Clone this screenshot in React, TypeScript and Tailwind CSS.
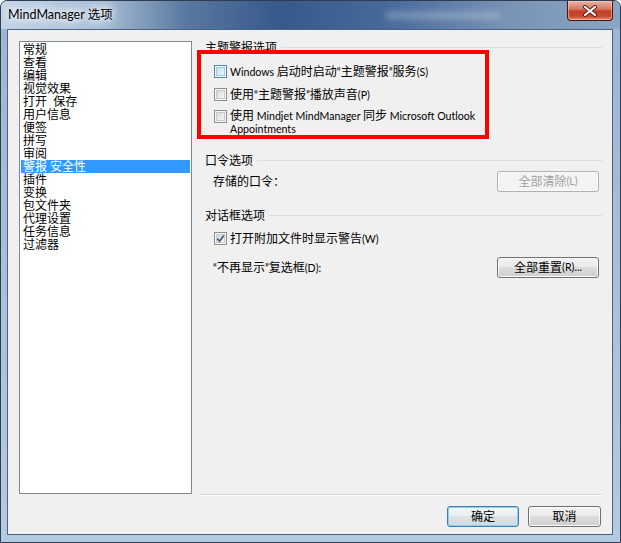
import React from "react";

type BoxState = "normal" | "hover" | "checked";

function CheckBox({ state }: { state: BoxState }) {
  const hover = state === "hover";
  return (
    <div
      className={
        hover
          ? "relative h-[13px] w-[13px] shrink-0 border border-[#5586a3] bg-[#f4fbff] p-[1px]"
          : "relative h-[13px] w-[13px] shrink-0 border border-[#8e8f8f] bg-[#f4f4f4] p-[1px]"
      }
    >
      <div
        className={
          hover
            ? "h-full w-full border border-[#9ccbe8] bg-[linear-gradient(135deg,#bfe1f5,#e8f6fd)]"
            : "h-full w-full border border-[#c9c9c9] bg-[linear-gradient(135deg,#d6d6d6,#f7f7f7)]"
        }
      />
      {state === "checked" && (
        <svg className="absolute left-[1px] top-[1px]" width="9" height="9" viewBox="0 0 9 9">
          <path d="M1.3 4.6 L3.6 7.2 L7.8 1.4" fill="none" stroke="#3f5582" strokeWidth="1.7" />
        </svg>
      )}
    </div>
  );
}

// latin runs are set a bit smaller, the dialog font is narrower than the cjk one
function L({ children }: { children: React.ReactNode }) {
  return <span className="text-[10.6px]">{children}</span>;
}

// one label line, fixed height so mixed font sizes don't grow the line box
function Line({ children }: { children: React.ReactNode }) {
  return <div className="h-[13px] leading-[13px] whitespace-nowrap">{children}</div>;
}

function GroupHeader({ title }: { title: string }) {
  return (
    <div className="flex h-[13px] items-center pl-[5px]">
      <span className="leading-[13px] whitespace-nowrap">{title}</span>
      <div className="ml-[4px] h-px flex-1 bg-[#d5dfe5]" />
    </div>
  );
}

function WinButton({
  children,
  kind = "normal",
  className = "",
}: {
  children: React.ReactNode;
  kind?: "normal" | "default" | "disabled";
  className?: string;
}) {
  let look =
    "border-[#707070] bg-[linear-gradient(to_bottom,#f2f2f2_0%,#ebebeb_50%,#dddddd_50%,#cfcfcf_100%)] shadow-[inset_0_0_0_1px_#fbfbfb] text-black";
  if (kind === "default")
    look =
      "border-[#3c7fb1] bg-[linear-gradient(to_bottom,#f3f6f8_0%,#eaeef1_50%,#dce3e8_50%,#d0dae1_100%)] shadow-[inset_0_0_0_1px_#8fd0f2] text-black";
  if (kind === "disabled")
    look = "border-[#adb2b5] bg-[#f4f4f4] text-[#a0a0a0] shadow-[inset_0_0_0_1px_#f9f9f9]";
  return (
    <div
      className={
        "flex h-[21px] items-center justify-center rounded-[3px] border leading-[13px] " + look + " " + className
      }
    >
      {children}
    </div>
  );
}

const pages = [
  "常规",
  "查看",
  "编辑",
  "视觉效果",
  "打开\u00a0\u00a0保存",
  "用户信息",
  "便签",
  "拼写",
  "审阅",
  "警报\u00a0安全性",
  "插件",
  "变换",
  "包文件夹",
  "代理设置",
  "任务信息",
  "过滤器",
];

export default function App() {
  return (
    <div className="h-[543px] w-[621px] font-['Lato','Noto_Sans_CJK_SC',sans-serif] text-[12px] text-black">
      <div className="flex h-full flex-col overflow-hidden rounded-t-[7px] border border-[#2f3d52] bg-[linear-gradient(to_bottom,#9cb5d1,#b4cae2)]">
        {/* title bar */}
        <div className="relative flex h-[28px] shrink-0 items-center bg-[linear-gradient(to_right,#c3d4e7_0%,#a9bfd8_16%,#58789f_30%,#37598b_45%,#46699a_62%,#7993b6_82%,#8ba5c4_100%)] pl-[7px]">
          <span className="text-[12.5px] leading-[14px] [text-shadow:0_0_6px_#ffffff,0_0_10px_#ffffff,0_0_14px_#e8f0f8]">
            MindManager 选项
          </span>
          <div className="ml-[272px] h-[7px] w-[116px] rounded-full bg-white/25 blur-[3px]" />
          <div className="absolute right-[7px] top-0 flex h-[20px] w-[46px] items-center justify-center rounded-b-[4px] border border-t-0 border-[#4a150d] bg-[linear-gradient(to_bottom,#e8b2a6_0%,#d97a66_40%,#c43e25_55%,#c84a30_80%,#e48b6d_100%)] shadow-[inset_0_0_0_1px_rgba(255,220,210,0.5)]">
            <svg width="16" height="12" viewBox="0 0 16 12">
              <path d="M3 2 L13 10 M13 2 L3 10" stroke="#5a1a10" strokeWidth="4" strokeLinecap="round" />
              <path d="M3 2 L13 10 M13 2 L3 10" stroke="#ffffff" strokeWidth="2.2" strokeLinecap="round" />
            </svg>
          </div>
        </div>

        {/* frame + client */}
        <div className="flex-1 pb-[7px] pl-[6px] pr-[7px]">
          <div className="h-full border border-[#4d6282] bg-[#f0f0f0] pl-[11px] pt-[11px]">
            <div className="flex h-[453px]">
              {/* list */}
              <div className="w-[173px] border border-[#828790] bg-white pl-[1px] pr-[1px] pt-[1px]">
                {pages.map((p) => (
                  <div
                    key={p}
                    className={
                      p.startsWith("警报")
                        ? "h-[13px] bg-[#3399ff] pl-[2px] leading-[13px] text-white whitespace-pre"
                        : "h-[13px] pl-[2px] leading-[13px] whitespace-pre"
                    }
                  >
                    {p}
                  </div>
                ))}
              </div>

              {/* right panel */}
              <div className="ml-[8px] flex w-[402px] flex-col">
                <GroupHeader title="主题警报选项" />
                <div className="relative -ml-[3px] -mt-[4px] h-[89px] w-[292px] border-4 border-[#ff0000] pl-[13px] pt-[11px]">
                  <div className="flex items-start gap-[3px]">
                    <CheckBox state="hover" />
                    <Line>
                      <L>Windows </L>启动时启动<L>“</L>主题警报<L>”</L>服务<L>(S)</L>
                    </Line>
                  </div>
                  <div className="mt-[10px] flex items-start gap-[3px]">
                    <CheckBox state="normal" />
                    <Line>
                      使用<L>“</L>主题警报<L>”</L>播放声音<L>(P)</L>
                    </Line>
                  </div>
                  <div className="mt-[9px] flex items-start gap-[3px]">
                    <CheckBox state="normal" />
                    <div className="-mt-[1px]">
                      <Line>
                        使用<L> Mindjet MindManager </L>同步<L> Microsoft Outlook</L>
                      </Line>
                      <Line>
                        <L>Appointments</L>
                      </Line>
                    </div>
                  </div>
                </div>

                <div className="mt-[15px]">
                  <GroupHeader title="口令选项" />
                </div>
                <div className="mt-[4px] flex h-[21px] items-center justify-between pl-[13px] pr-[3px]">
                  <span>存储的口令：</span>
                  <WinButton kind="disabled" className="w-[102px]">
                    全部清除<L>(L)</L>
                  </WinButton>
                </div>

                <div className="mt-[17px]">
                  <GroupHeader title="对话框选项" />
                </div>
                <div className="mt-[10px] flex items-start gap-[3px] pl-[14px]">
                  <CheckBox state="checked" />
                  <Line>
                    打开附加文件时显示警告<L>(W)</L>
                  </Line>
                </div>
                <div className="mt-[12px] flex h-[21px] items-center justify-between pl-[13px] pr-[3px]">
                  <span>
                    <L>“</L>不再显示<L>”</L>复选框<L>(D):</L>
                  </span>
                  <WinButton className="w-[102px]">
                    全部重置<L>(R)...</L>
                  </WinButton>
                </div>
              </div>
            </div>

            {/* bottom separator + buttons */}
            <div className="ml-[181px] w-[402px] border-t border-b border-t-[#d5d5d5] border-b-white" />
            <div className="ml-[181px] mt-[10px] flex w-[402px] justify-end gap-[9px] pr-[1px]">
              <WinButton kind="default" className="w-[72px]">
                确定
              </WinButton>
              <WinButton className="w-[73px]">取消</WinButton>
            </div>
          </div>
        </div>
      </div>
    </div>
  );
}
